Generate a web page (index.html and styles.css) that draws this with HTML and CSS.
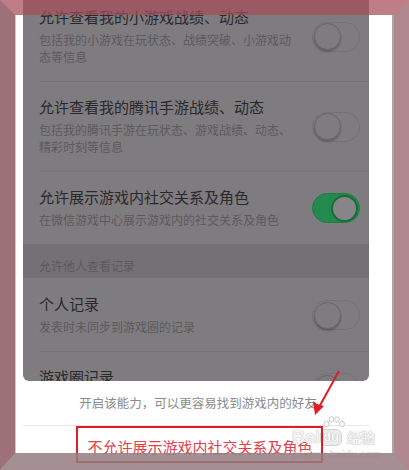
FILE: index.html
```html
<!DOCTYPE html>
<html lang="zh-CN">
<head>
<meta charset="utf-8">
<title>游戏隐私设置</title>
<link rel="stylesheet" href="styles.css">
</head>
<body>
<div class="page">
  <div class="screen">
    <div class="list">
      <div class="item first">
        <div class="text">
          <div class="title">允许查看我的小游戏战绩、动态</div>
          <div class="sub">包括我的小游戏在玩状态、战绩突破、小游戏动态等信息</div>
        </div>
        <span class="toggle"><span class="knob"></span></span>
      </div>
      <div class="item">
        <div class="text">
          <div class="title">允许查看我的腾讯手游战绩、动态</div>
          <div class="sub">包括我的腾讯手游在玩状态、游戏战绩、动态、精彩时刻等信息</div>
        </div>
        <span class="toggle"><span class="knob"></span></span>
      </div>
      <div class="item">
        <div class="text">
          <div class="title">允许展示游戏内社交关系及角色</div>
          <div class="sub">在微信游戏中心展示游戏内的社交关系及角色</div>
        </div>
        <span class="toggle on"><span class="knob"></span></span>
      </div>
      <div class="section">允许他人查看记录</div>
      <div class="item">
        <div class="text">
          <div class="title">个人记录</div>
          <div class="sub">发表时未同步到游戏圈的记录</div>
        </div>
        <span class="toggle"><span class="knob"></span></span>
      </div>
      <div class="item">
        <div class="text">
          <div class="title">游戏圈记录</div>
          <div class="sub">发表时同步到游戏圈的记录</div>
        </div>
        <span class="toggle"><span class="knob"></span></span>
      </div>
    </div>
    <div class="dialog">
      <div class="msg">开启该能力，可以更容易找到游戏内的好友</div>
      <div class="btn">不允许展示游戏内社交关系及角色</div>
    </div>
  </div>

  <div class="watermark">
    <svg class="paw" width="22" height="14" viewBox="0 0 22 14">
      <ellipse cx="3.5" cy="8" rx="2.5" ry="3" />
      <ellipse cx="8.5" cy="3.5" rx="2.3" ry="2.8" />
      <ellipse cx="14" cy="3.5" rx="2.3" ry="2.8" />
      <ellipse cx="19" cy="8" rx="2.5" ry="3" />
    </svg>
    <div class="wm-row"><span class="wm-bai">Bai</span><span class="wm-du">du</span><span class="wm-jy">经验</span></div>
    <div class="wm-url">jingyan.baidu.com</div>
  </div>

  <svg class="marks" width="409" height="470" viewBox="0 0 409 470">
    <rect x="77" y="427" width="245" height="35" fill="none" stroke="#e01c26" stroke-width="2"/>
    <line x1="339" y1="371" x2="318" y2="409" stroke="#e01c26" stroke-width="2"/>
    <polygon points="315,415 313,401 317,404 324,406" fill="#e01c26"/>
  </svg>

  <div class="frame"></div>
</div>
</body>
</html>
```

FILE: styles.css
```css
html, body {
  margin: 0;
  padding: 0;
}

body {
  width: 409px;
  height: 470px;
  overflow: hidden;
  font-family: "Noto Sans CJK SC", "Noto Sans", sans-serif;
}

.page {
  position: relative;
  width: 409px;
  height: 470px;
  background: #ffffff;
  padding-left: 23px;
  box-sizing: border-box;
  overflow: hidden;
}

.screen {
  width: 346px;
  height: 470px;
  display: flex;
  flex-direction: column;
  background: #ffffff;
}

.list {
  height: 381px;
  flex: none;
  overflow: hidden;
  background: #7f7c80;
  border-radius: 0 0 6px 6px;
}

.item {
  display: flex;
  align-items: center;
  gap: 17px;
  margin-left: 16px;
  padding: 17px 9px 16px 0;
}

.item.first {
  margin-top: -9px;
}

.item + .item {
  border-top: 1px solid #767377;
  padding-top: 16px;
}

.text {
  flex: 1;
  min-width: 0;
}

.title {
  font-size: 15px;
  line-height: 18px;
  color: #29282a;
}

.sub {
  margin-top: 5px;
  font-size: 12px;
  line-height: 17px;
  color: #5c595d;
}

.toggle {
  flex: none;
  position: relative;
  width: 48px;
  height: 30px;
  box-sizing: border-box;
  border-radius: 15px;
  border: 1px solid #747275;
  display: flex;
  align-items: center;
  padding: 0 1px;
}

.knob {
  width: 27px;
  height: 27px;
  box-sizing: border-box;
  border-radius: 50%;
  background: #7f7c80;
  border: 1px solid #68666a;
  box-shadow: 0 2px 2px rgba(0, 0, 0, 0.22);
}

.toggle.on {
  background: #23894c;
  border-color: #1f7c44;
  justify-content: flex-end;
}

.toggle.on .knob {
  background: #888588;
  border: 2px solid #1a6b3b;
  box-shadow: none;
}

.section {
  background: #747175;
  padding: 13px 16px 4px;
  font-size: 12px;
  line-height: 17px;
  color: #5c595d;
}

.dialog {
  flex: 1;
  background: #ffffff;
}

.msg {
  height: 44px;
  line-height: 44px;
  text-align: center;
  font-size: 12.5px;
  color: #8a8a8a;
  border-bottom: 1px solid #e8e8e8;
  padding-left: 4px;
}

.btn {
  height: 42px;
  line-height: 42px;
  text-align: center;
  font-size: 15px;
  color: #e3404b;
  padding-left: 8px;
}

.watermark {
  position: absolute;
  left: 292px;
  top: 416px;
  width: 96px;
  pointer-events: none;
}

.paw {
  display: block;
  margin-left: 31px;
  fill: #f6f6f6;
  stroke: #d0d0d0;
  stroke-width: 1;
}

.wm-row {
  display: flex;
  align-items: center;
  font-family: "Liberation Sans", sans-serif;
  font-weight: bold;
  line-height: 17px;
  margin-top: -1px;
}

.wm-bai {
  font-size: 18px;
  color: #f4f4f4;
  text-shadow: 0 0 1px #bdbdbd, 0 0 1px #bdbdbd;
}

.wm-du {
  font-size: 13px;
  line-height: 14px;
  padding: 0 2px 1px;
  border-radius: 6px;
  border: 1px solid #d3d3d3;
  background: #ececec;
  color: #fafafa;
  text-shadow: 0 0 1px #b5b5b5, 0 0 1px #b5b5b5;
}

.wm-jy {
  margin-left: 5px;
  font-family: "Noto Sans CJK SC", sans-serif;
  font-size: 14px;
  font-weight: bold;
  color: #f4f4f4;
  text-shadow: 0 0 1px #bdbdbd, 0 0 1px #bdbdbd;
}

.wm-url {
  margin-top: 2px;
  font-family: "Liberation Sans", sans-serif;
  font-size: 11px;
  line-height: 12px;
  color: #e4e4e4;
  text-shadow: 0 0 1px #c4c4c4;
}

.marks {
  position: absolute;
  left: 0;
  top: 0;
  pointer-events: none;
}

.frame {
  position: absolute;
  inset: 0;
  border-style: solid;
  border-width: 15px 15px 17px 15px;
  border-color: rgba(165, 75, 88, 0.72) #b1878f rgba(150, 125, 130, 0.86) #9d7177;
  box-shadow: inset -2px 0 0 #a9a7a8, inset 1px 0 0 #d8c4c7;
  pointer-events: none;
}
```
